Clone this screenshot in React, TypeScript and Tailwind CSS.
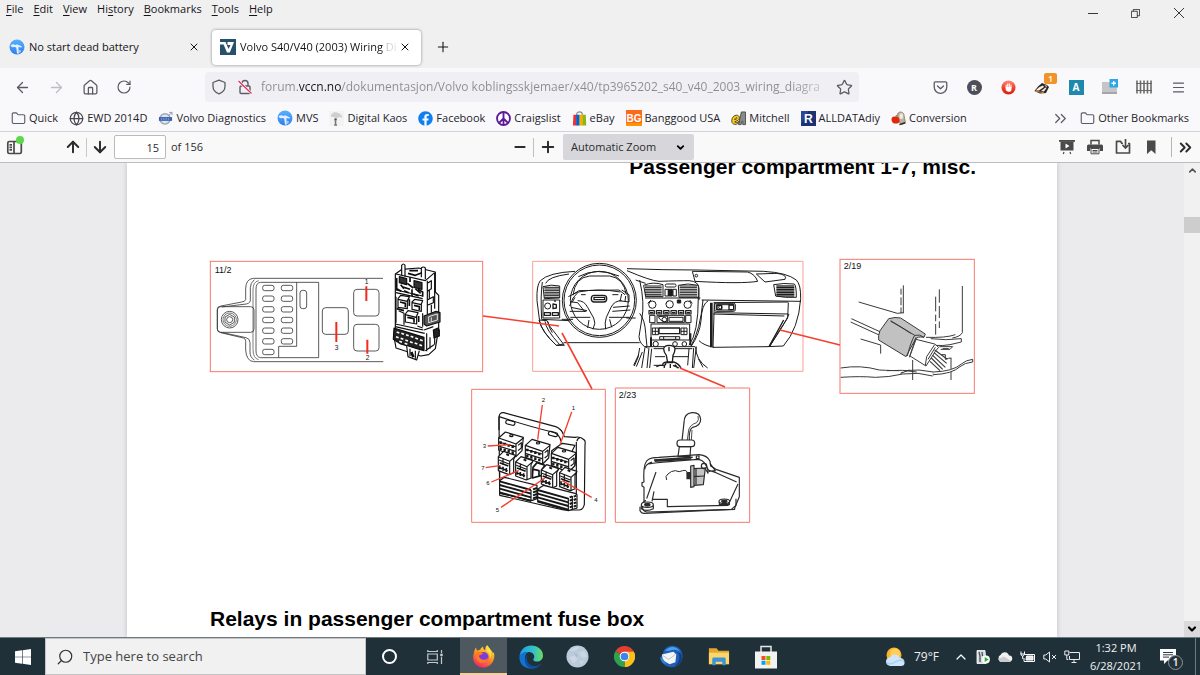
import React from "react";
import {
  ArrowDown,
  ArrowLeft,
  ArrowRight,
  ArrowUp,
  ChevronDown,
  ChevronsRight,
  ChevronUp,
  Folder,
  Globe,
  House,
  Menu,
  Minus,
  Plus,
  RotateCw,
  Search,
  Star,
  X,
} from "lucide-react";
import { FaFacebook } from "react-icons/fa";

/* ---------- favicons ---------- */

const BlueSpanner = () => (
  <svg viewBox="0 0 16 16" className="size-4 shrink-0">
    <defs>
      <linearGradient id="mvs" x1="0" y1="0" x2="0" y2="1">
        <stop offset="0" stopColor="#58b0fb" />
        <stop offset="1" stopColor="#2f7ff0" />
      </linearGradient>
    </defs>
    <circle cx="8" cy="8" r="7.500" fill="url(#mvs)" />
    <path d="M1.500 6.500c1.500-1.500 3.500-1.400 5-.6L8 5.200l5 2.200-.5 1.200-3-.7V10l.4 4.500-1.900.3L7.300 8.700 6 8 3 8.200z" fill="#e2efff" />
    <path d="M9 10.500l3 1-.5 2-2 .5z" fill="#a9cdf8" />
  </svg>
);

const VLogo = () => (
  <svg viewBox="0 0 16 16" className="size-4 shrink-0">
    <rect width="16" height="16" fill="#27506a" />
    <path d="M0 3h5.500l3 7 2-4H7.500V3H14L9.800 13.500H7L3.600 5.500H0z" fill="#fff" />
  </svg>
);

const VolvoBadge = () => (
  <svg viewBox="0 0 16 16" className="size-[15px] shrink-0">
    <circle cx="7.500" cy="8.500" r="5.500" fill="#dfe5ee" stroke="#9aa5b5" strokeWidth="1.500" />
    <path d="M11.500 4.500L15 1.500M12 1.500h3v3" stroke="#8e99a8" fill="none" />
    <rect x="1" y="6.500" width="14" height="4" fill="#3a5fae" />
    <path d="M3 8.500h10" stroke="#b8c8ea" strokeDasharray="1.500 1" />
  </svg>
);

const KaosIcon = () => (
  <svg viewBox="0 0 16 16" className="size-[15px] shrink-0">
    <rect width="16" height="16" fill="#f3f3f3" />
    <path d="M2 6c0-3 3-5 6-4.500S14 4 14.500 7L11 6.500 8 8 5 6.500z" fill="#cfcfcf" />
    <circle cx="7" cy="9" r="1.300" fill="#555" />
    <path d="M7 10v4M5.500 15h3M6 11h1" stroke="#777" strokeWidth="1.600" />
  </svg>
);

const PeaceIcon = () => (
  <svg viewBox="0 0 16 16" className="size-[15px] shrink-0" fill="none" stroke="#5f1a9b" strokeWidth="2">
    <circle cx="8" cy="8" r="6.900" fill="#fff" />
    <path d="M8 1v14M8 8l-5 5M8 8l5 5" />
  </svg>
);

const EbayBag = () => (
  <svg viewBox="0 0 16 16" className="size-[15px] shrink-0">
    <path d="M5 6V3.500C5 0 11 0 11 3.500V6" fill="none" stroke="#8d8d8d" strokeWidth="1.200" />
    <path d="M1.500 4H5v11.500H1z" fill="#e53238" />
    <rect x="4.500" y="4" width="3.800" height="11.500" fill="#0064d2" />
    <rect x="8" y="4" width="3.800" height="11.500" fill="#f5af02" />
    <path d="M11.500 4h3.200l.5 11.500h-3.700z" fill="#86b817" />
  </svg>
);

const BanggoodIcon = () => (
  <svg viewBox="0 0 16 16" className="size-4 shrink-0">
    <rect width="16" height="16" fill="#ff6a1a" />
    <rect y="13" width="16" height="3" fill="#ff9400" />
    <text x="8" y="12" textAnchor="middle" fontSize="10" fontWeight="700" fill="#fff" fontFamily="Liberation Sans, sans-serif">BG</text>
  </svg>
);

const MitchellIcon = () => (
  <svg viewBox="0 0 16 16" className="size-[15px] shrink-0">
    <path d="M8 14.500L11 1h4.500v13.500h-3V11h-1l-.7 3.500z" fill="#8b8b8b" stroke="#333" strokeWidth=".8" />
    <path d="M8.800 11c-1 4.500-8 4.500-8-.5C.8 6.500 3.500 4.500 6 4.500c3 0 4 3.500 1.500 5.500L4 11.500c1 1.500 3 .8 4.800-.5zM3.800 9.300c.5-2 2.500-3 2.700-1.800 0 .8-1.200 1.500-2.700 1.800z" fill="#ffd21f" stroke="#3b3000" strokeWidth=".9" fillRule="evenodd" />
  </svg>
);

const AlldataIcon = () => (
  <svg viewBox="0 0 16 16" className="size-[15px] shrink-0">
    <rect width="16" height="16" fill="#1d3272" />
    <path d="M0 0h8L0 14z" fill="#2c4795" />
    <text x="8" y="12.500" textAnchor="middle" fontSize="13" fontWeight="700" fill="#fff" fontFamily="Liberation Sans, sans-serif">R</text>
  </svg>
);

const ConversionIcon = () => (
  <svg viewBox="0 0 16 16" className="size-[15px] shrink-0">
    <path d="M7 3c2-3.500 7-2 7 2l1.500 8-5 1.500L7 8z" fill="#b9b1a4" stroke="#8a7654" strokeWidth=".8" />
    <ellipse cx="11" cy="5.500" rx="2" ry="3" fill="#eee9de" />
    <path d="M9 14.500l6-2" stroke="#2e2c2a" strokeWidth="1.500" />
    <path d="M5 6.500C3 5 .5 6.500.5 9s2 5 4.500 4.200C8.500 14 9.500 11.500 9 9S7 5.500 5 6.500z" fill="#e3270d" />
    <path d="M5 6.500L6 4.500" stroke="#4b7b20" strokeWidth="1.200" />
  </svg>
);

type Bookmark = { label: string; icon: React.ReactNode };

const bookmarks: Bookmark[] = [
  { label: "Quick", icon: <Folder className="size-[15px] shrink-0 text-[#5b5b66]" strokeWidth={1.8} /> },
  { label: "EWD 2014D", icon: <Globe className="size-[15px] shrink-0 text-[#4a4a55]" strokeWidth={2} /> },
  { label: "Volvo Diagnostics", icon: <VolvoBadge /> },
  { label: "MVS", icon: <BlueSpanner /> },
  { label: "Digital Kaos", icon: <KaosIcon /> },
  { label: "Facebook", icon: <FaFacebook className="size-[15px] shrink-0 text-[#0f80f0]" /> },
  { label: "Craigslist", icon: <PeaceIcon /> },
  { label: "eBay", icon: <EbayBag /> },
  { label: "Banggood USA", icon: <BanggoodIcon /> },
  { label: "Mitchell", icon: <MitchellIcon /> },
  { label: "ALLDATAdiy", icon: <AlldataIcon /> },
  { label: "Conversion", icon: <ConversionIcon /> },
];

/* ---------- browser chrome ---------- */

const menus = [
  ["", "F", "ile"],
  ["", "E", "dit"],
  ["", "V", "iew"],
  ["Hi", "s", "tory"],
  ["", "B", "ookmarks"],
  ["", "T", "ools"],
  ["", "H", "elp"],
];

function MenuBar() {
  return (
    <div className="flex h-7 items-start justify-between">
      <nav className="flex gap-[10px] pl-[6px] text-[11px] leading-[18px]">
        {menus.map(([pre, key, post]) => (
          <button key={key + post} type="button">
            {pre}
            <span className="underline underline-offset-2">{key}</span>
            {post}
          </button>
        ))}
      </nav>
      <div className="flex text-[#222]">
        <button type="button" aria-label="Minimize" className="grid h-[26px] w-[43px] place-items-center">
          <svg viewBox="0 0 10 10" className="size-[10px]"><path d="M0 5.500h10" stroke="currentColor" strokeWidth=".9" /></svg>
        </button>
        <button type="button" aria-label="Restore" className="grid h-[26px] w-[43px] place-items-center">
          <svg viewBox="0 0 10 10" className="size-[9px]" fill="none" stroke="currentColor" strokeWidth=".9">
            <path d="M.5 2.500h6.500v7H.5zM2.500 2.500V.5h7v7H7" />
          </svg>
        </button>
        <button type="button" aria-label="Close" className="grid h-[26px] w-[43px] place-items-center">
          <svg viewBox="0 0 10 10" className="size-[10px]"><path d="M0 0l10 10M10 0L0 10" stroke="currentColor" strokeWidth=".9" /></svg>
        </button>
      </div>
    </div>
  );
}

function Tab({ title, icon, active }: { title: string; icon: React.ReactNode; active?: boolean }) {
  return (
    <div
      className={
        active
          ? "flex h-[35px] w-[209px] items-center rounded bg-white pr-[10px] pl-2 shadow-[0_0_3px_rgba(0,0,0,0.45)]"
          : "flex h-[35px] w-[209px] items-center rounded pr-[10px] pl-2"
      }
    >
      {icon}
      <button
        type="button"
        className={
          active
            ? "ml-1 min-w-0 flex-1 overflow-hidden bg-[linear-gradient(90deg,#15141a_142px,#d0d0d0_148px,#e8e8e8_160px)] bg-clip-text text-left text-[11px] whitespace-nowrap text-transparent"
            : "ml-1 min-w-0 flex-1 overflow-hidden text-left text-[11px] whitespace-nowrap"
        }
      >
        {title}
      </button>
      <button type="button" aria-label={`Close ${title}`} className="grid w-3 shrink-0 place-items-center">
        <X className="size-3" strokeWidth={2} />
      </button>
    </div>
  );
}

function NavButton({ label, children }: { label: string; children: React.ReactNode }) {
  return (
    <button type="button" aria-label={label} className="relative grid h-7 w-[34px] shrink-0 place-items-center text-[#5b5b66]">
      {children}
    </button>
  );
}

function NavBar() {
  return (
    <div className="flex h-[38px] items-center bg-[#f9f9fb] px-[5px]">
      <NavButton label="Back"><ArrowLeft className="size-[17px]" strokeWidth={1.8} /></NavButton>
      <NavButton label="Forward"><ArrowRight className="size-[17px] text-[#bdbdc2]" strokeWidth={1.8} /></NavButton>
      <NavButton label="Home"><House className="size-[17px]" strokeWidth={1.8} /></NavButton>
      <NavButton label="Reload"><RotateCw className="size-[16px]" strokeWidth={1.8} /></NavButton>
      <div className="mx-16 flex h-[30px] min-w-0 flex-1 items-center rounded bg-[#f0f0f4] px-[6px] text-[#5b5b66]">
        <svg viewBox="0 0 16 16" className="size-4 shrink-0" fill="none" stroke="currentColor" strokeWidth="1.300">
          <path d="M8 1.200L14 3.500v3.800c0 3.500-2.500 6.300-6 7.500-3.500-1.200-6-4-6-7.500V3.500z" strokeLinejoin="round" />
        </svg>
        <svg viewBox="0 0 16 16" className="ml-[10px] size-4 shrink-0" fill="none" stroke="currentColor" strokeWidth="1.400">
          <rect x="3" y="7" width="10" height="7.500" rx="1.200" />
          <path d="M5 7V4.500a3 3 0 0 1 6 0V7" />
          <path d="M1.500 2l13 12.500" stroke="#fff" strokeWidth="2.500" />
          <path d="M1.500 2l13 12.500" stroke="#e8305c" />
        </svg>
        <input
          type="text"
          aria-label="Address"
          defaultValue="forum.vccn.no/dokumentasjon/Volvo koblingsskjemaer/x40/tp3965202_s40_v40_2003_wiring_diagra"
          className="ml-2 min-w-0 flex-1 bg-[linear-gradient(90deg,#8b8b92_38px,#15141a_38px,#15141a_81px,#8b8b92_81px,#8b8b92_530px,#dcdce0_570px)] bg-clip-text text-[12px] text-transparent outline-none"
        />
        <button type="button" aria-label="Bookmark this page"><Star className="size-[17px]" strokeWidth={1.8} /></button>
      </div>
      <NavButton label="Pocket">
        <svg viewBox="0 0 16 16" className="size-[15px]" fill="none" stroke="currentColor" strokeWidth="1.400" strokeLinecap="round" strokeLinejoin="round">
          <path d="M2.500 2h11c.7 0 1.200.5 1.200 1.200V7.500a6.700 6.700 0 0 1-13.400 0V3.200C1.300 2.500 1.800 2 2.500 2zM4.800 6.300L8 9.300l3.200-3" />
        </svg>
      </NavButton>
      <NavButton label="Reader">
        <span className="grid size-[15px] place-items-center rounded-full bg-[#4f4f5c] text-[9px] leading-none font-bold text-white">R</span>
      </NavButton>
      <NavButton label="Blocker">
        <svg viewBox="0 0 16 16" className="size-[15px]">
          <defs>
            <linearGradient id="hand" x1="0" y1="0" x2="0" y2="1">
              <stop offset="0" stopColor="#ff8a78" />
              <stop offset=".5" stopColor="#f04430" />
              <stop offset="1" stopColor="#d91c0b" />
            </linearGradient>
          </defs>
          <circle cx="8" cy="8" r="7.500" fill="url(#hand)" />
          <path d="M5.500 8V5.500M7.200 7.500V4M8.900 7.500V4M10.600 8V5.500" stroke="#fff" strokeWidth="1.200" strokeLinecap="round" />
          <path d="M5 7.500h6.200V10c0 1.700-1.200 2.500-2.900 2.500S4.800 11.200 5 9.500z" fill="#fff" />
        </svg>
      </NavButton>
      <NavButton label="Badger">
        <svg viewBox="0 0 16 16" className="size-4">
          <path d="M.5 12L4 7.500 8 4l5 2 2 2-1.500 3L12 14l-6 .5z" fill="#2c2620" />
          <path d="M1.500 11.500L5.500 8 9 6.500l1 1.500-5 3.500zM7 12l4.500-3.500 1 .5-2.500 3.500z" fill="#f4efe7" />
          <path d="M10 5.500l3 1.500-.5 1.500z" fill="#d9d2c6" />
          <path d="M1 12.500l4 .3 5 1" stroke="#d2832f" fill="none" />
        </svg>
        <span className="absolute top-0 right-[2px] h-[11px] w-[13px] rounded-xs bg-[#f0932b] text-center text-[9px] leading-[11px] font-semibold text-white">1</span>
      </NavButton>
      <NavButton label="Autofill">
        <span className="grid size-[15px] place-items-center bg-[#1e88ad] text-[10px] leading-none font-bold text-white">A</span>
      </NavButton>
      <NavButton label="New container">
        <svg viewBox="0 0 16 16" className="size-4">
          <rect x="0" y="3" width="15" height="12" fill="#c5c5c9" />
          <rect x="0" y="13" width="15" height="2" fill="#a5a5aa" />
          <rect x="7.500" y="0" width="8.500" height="8.500" fill="#2aa7e6" />
          <path d="M11.700 2v4.500M9.500 4.200H14" stroke="#fff" strokeWidth="1.400" />
        </svg>
      </NavButton>
      <NavButton label="Fence">
        <svg viewBox="0 0 16 16" className="size-4" stroke="#6a6a6a">
          <path d="M1 1.500v13M4.500 1.500v13M8 1.500v13M11.500 1.500v13M15 1.500v13" strokeWidth="1.600" />
          <path d="M0 4.500h16M0 11.500h16" strokeWidth="1.100" />
        </svg>
      </NavButton>
      <NavButton label="Application menu"><Menu className="size-[15px]" strokeWidth={1.8} /></NavButton>
    </div>
  );
}

function BookmarksBar() {
  return (
    <div className="flex h-[25px] items-center justify-between bg-[#f9f9fb] px-[11px] pb-px text-[11px] text-[#25242b]">
      <div className="flex gap-[11px]">
        {bookmarks.map((b) => (
          <a key={b.label} href="#" className="flex items-center gap-[3px] whitespace-nowrap">
            {b.icon}
            {b.label}
          </a>
        ))}
      </div>
      <div className="flex items-center gap-[10px]">
        <button type="button" aria-label="More bookmarks"><ChevronsRight className="size-[19px] text-[#5b5b66]" strokeWidth={1.6} /></button>
        <button type="button" className="flex items-center gap-[3px] whitespace-nowrap">
          <Folder className="size-[15px] text-[#5b5b66]" strokeWidth={1.8} />
          Other Bookmarks
        </button>
      </div>
    </div>
  );
}

function PdfToolbar() {
  return (
    <div className="grid h-8 grid-cols-[1fr_auto_1fr] items-center border-t border-b border-t-[#d3d3d7] border-b-[#bdbdbd] bg-[#f9f9fa] pl-[6px] text-[11px] text-[#2b2b2b]">
      <div className="flex items-center">
        <button type="button" aria-label="Toggle sidebar" className="relative mr-[40px]">
          <svg viewBox="0 0 18 18" className="size-[18px]" fill="none" stroke="#4a4a4a" strokeWidth="1.700">
            <rect x="1.800" y="3.500" width="13.500" height="12" rx="1.500" />
            <path d="M8 3.500v12M3.500 6.800h2.500M3.500 9.300h2.500M3.500 11.800h2.500" />
          </svg>
          <span className="absolute -top-0.5 right-0 size-2 rounded-full bg-[#5bd94b]" />
        </button>
        <button type="button" aria-label="Previous page"><ArrowUp className="size-[18px]" strokeWidth={2.6} /></button>
        <span className="mx-1 h-[19px] w-px bg-[#c9c9c9]" />
        <button type="button" aria-label="Next page"><ArrowDown className="size-[18px]" strokeWidth={2.6} /></button>
        <input
          type="text"
          aria-label="Page"
          defaultValue="15"
          className="ml-[5px] h-6 w-[52px] rounded-xs border border-[#bbbbbc] bg-white pr-[6px] text-right outline-none"
        />
        <span className="ml-[5px]">of 156</span>
      </div>
      <div className="flex items-center">
        <button type="button" aria-label="Zoom out"><Minus className="size-4" strokeWidth={2.8} /></button>
        <span className="mx-[5px] h-[19px] w-px bg-[#c0c0c0]" />
        <button type="button" aria-label="Zoom in"><Plus className="size-[18px]" strokeWidth={2.6} /></button>
        <div className="relative ml-[6px]">
          <select aria-label="Zoom" className="h-[26px] w-[131px] appearance-none rounded-xs bg-[#d7d7db] pl-2 outline-none">
            <option>Automatic Zoom</option>
          </select>
          <ChevronDown className="pointer-events-none absolute top-2 right-2 size-[11px] text-black" strokeWidth={4} />
        </div>
      </div>
      <div className="flex items-center justify-end gap-3 pr-[5px]">
        <button type="button" aria-label="Presentation mode">
          <svg viewBox="0 0 16 16" className="size-4">
            <path d="M0 1h16v1.800H0z" fill="#4a4a4a" />
            <path d="M1.500 2.500h13v9h-13z" fill="#4a4a4a" />
            <path d="M6.500 4.500l4 2.500-4 2.500z" fill="#fff" />
            <path d="M5 13L4.300 15M11 13l.7 2" stroke="#4a4a4a" strokeWidth="1.200" />
          </svg>
        </button>
        <button type="button" aria-label="Print">
          <svg viewBox="0 0 16 16" className="size-4">
            <path d="M4 5.500v-4h8v4" fill="none" stroke="#4a4a4a" strokeWidth="1.500" />
            <path d="M1.500 5.500h13A1.500 1.500 0 0 1 16 7v5h-3v-2.500H3V12H0V7a1.500 1.500 0 0 1 1.500-1.500z" fill="#4a4a4a" />
            <path d="M4 9.500h8v5.300H4zM5.500 11.500h5M5.500 13h5" fill="#fff" stroke="#4a4a4a" />
          </svg>
        </button>
        <button type="button" aria-label="Download">
          <svg viewBox="0 0 16 16" className="size-4" fill="none" stroke="#4a4a4a" strokeWidth="1.700">
            <path d="M8 4.500H7L5.500 2.300H1.500v11.700h13V4.500H13" strokeLinejoin="round" />
            <path d="M10.500 0v8.500M7.500 6l3 3 3-3" />
          </svg>
        </button>
        <button type="button" aria-label="Current view">
          <svg viewBox="0 0 16 16" className="size-4"><path d="M4 1.500h8.500V15l-4.250-3.800L4 15z" fill="#4a4a4a" /></svg>
        </button>
        <button type="button" aria-label="Tools" className="flex items-center gap-1">
          <span className="h-5 w-px bg-[#b5b5b5]" />
          <ChevronsRight className="size-[19px]" strokeWidth={2.4} />
        </button>
      </div>
    </div>
  );
}

/* ---------- diagram ---------- */

const slots = [114, 146, 178, 210, 242, 274, 306];

function FuseBoxFigure() {
  return (
    <svg x="200" y="250" width="290" height="130" viewBox="0 0 870 390" fill="none" stroke="#3a3a3a" strokeWidth="2.500">
      <rect x="31" y="34" width="817" height="331" stroke="#f8796c" strokeWidth="3" />
      <path d="M549 85H160q-23 2-23 32v32q-2 6-12 7l-62 12q-11 1-11 10v59q0 8 10 11l64 15q12 2 11 12v25q2 33 24 35h389" />
      <path d="M163 89q-12 10-12 24v34q2 12-12 15l-74 9M163 330q-13-8-13-24v-28q0-12-12-15l-74-16" />
      <path d="M176 92q-17 3-17 28v178q0 27 17 31" strokeWidth="2" />
      <rect x="52" y="170" width="110" height="77" rx="10" />
      <path d="M356 97H182q-14 1-14 20v186q0 18 14 20H356zM290 97v192h-54v34" />
      {slots.map((y, i) => (
        <g key={y}>
          <rect x="188" y={y - 8} width="34" height="16" rx="6" />
          {i < 6 && <rect x="244" y={y - 8} width="34" height="16" rx="6" />}
        </g>
      ))}
      <rect x="300" y="121" width="20" height="55" rx="8" />
      <circle cx="89" cy="209" r="25" />
      <circle cx="89" cy="209" r="20" strokeWidth="2" />
      <path d="M89 193l14 8v16l-14 8-14-8v-16z" />
      <circle cx="89" cy="209" r="9" />
      <rect x="461" y="118" width="76" height="80" rx="10" />
      <rect x="461" y="223" width="76" height="80" rx="10" />
      <rect x="367" y="173" width="78" height="80" rx="10" />
      <path d="M499 109v44M409 216v60M502 269v42" stroke="#f22b1c" strokeWidth="6" />
      <g fill="#111" stroke="none" fontSize="20">
        <text x="44" y="68" fontSize="27">11/2</text>
        <text x="494" y="103">1</text>
        <text x="497" y="330">2</text>
        <text x="404" y="299">3</text>
      </g>
      {/* junction box in perspective */}
      <g stroke="#0d0d0d" strokeWidth="3.500" strokeLinejoin="round">
        <path d="M586 72l20-14 50-4 50 12v60l10 10v100l-10 60-20 18-24 4-74-24-6-34 4-24z" fill="#fff" />
        <path d="M605 76V46q5-8 10 0v34M664 82V54q6-6 12 0v34" fill="#fff" />
        <path d="M588 72l88 20 28-24M682 92v100M704 70v106M588 120l80 18M588 128l80 18M586 222l84 18M586 230l88 20" />
        <path d="M598 80l22 6v18l-22-6zM642 92l24 6v20l-24-6z" fill="#333" />
        <path d="M602 104l10 12M646 116l16 14M624 70l22 6 20-8M628 62h26M622 100l18 14M630 82v14M590 84v36M606 110l24 8M636 118v20M654 118l14 8v14M590 116l14 8M612 122l14 6M640 132l16 6" stroke="#0d0d0d" strokeWidth="5" />
        <path d="M594 146l8-10 26 4-6 12v24l-28-4zM594 148l28 6 6-12" fill="#fff" />
        <path d="M636 156l8-8 24 4-4 10v22l-28-6zM636 158l28 6" fill="#fff" />
        <path d="M616 192l8-10 30 6-4 10v24l-34-6zM616 194l32 8 6-12" fill="#fff" />
        <path d="M600 156l16 4v12M642 166l16 4v10M622 202l20 4v12M628 148v20M590 176l22 6M656 198v18" strokeWidth="5" />
        <path d="M588 140v78M596 182l16 8v34M668 190v40M652 228l16 6M682 100l12-8v24l-12 8M682 150l18-10v18l-18 8M688 120v26M694 164v24" />
        <path d="M672 198l36-14 12 4v28l-40 12-8-6z" fill="#555" />
        <path d="M686 200l26-8v18l-26 8zM694 202v12" stroke="#fff" strokeWidth="2.500" />
        <path d="M700 240l14-6 4 6v18l-16 6z" fill="#222" />
        <path d="M582 234l90 28v40l-70-20-22-14z" fill="#222" />
        <path d="M590 246l8 3M604 250l8 3M618 254l8 3M632 259l8 3M646 264l8 3M660 269l8 3M588 260l8 3M602 265l8 3M616 270l8 3M630 275l8 3M644 279l8 3M658 284l8 3M598 274l8 3M614 280l8 3" stroke="#fff" strokeWidth="5" />
        <path d="M620 288l4 32 26 10 8-28M630 296v22M646 302v24" fill="#fff" />
        <path d="M634 306l6 16" strokeWidth="8" />
        <path d="M680 250v54M690 262v34M704 262v22M676 302l26-18M672 240l28-10" />
      </g>
    </svg>
  );
}

const ventRows = [0, 1, 2, 3, 4, 5, 6];

function DashboardFigure() {
  return (
    <svg x="525" y="250" width="290" height="130" viewBox="0 0 870 390" fill="none" stroke="#1c1c1c" strokeWidth="3" strokeLinejoin="round">
      <rect x="23" y="34" width="811" height="330" stroke="#f8a097" strokeWidth="3" />
      {/* dashboard shell */}
      <path d="M150 64q-80 4-104 28-12 14-10 60l8 62q6 30 50 72l22-4M306 56q110 4 210 4l200 4q70 4 98 26 14 14 13 56-6 90-52 142l-50 2" />
      <path d="M62 100q8-20 70-28M52 96q-6 40-2 112l84 4M306 62q70 30 96 32 60-2 90-2 30 2 30 24v34M332 90q10 4 30 10" />
      <path d="M502 64l8 30q140 8 188 0-8-22-30-28zM694 72l26 24 60-8q8-14-24-18z" />
      <circle cx="514" cy="77" r="4" />
      <path d="M530 150l298 4M566 158l224-2M568 188l222 4M568 158l-4 134 162-2M564 192l214 6M790 158l-2 46q-28 40-54 86M566 292q-30-6-44-20M792 192q-10 26-58 96" />
      <path d="M557 158v134M561 158v132M732 290l44-80" strokeWidth="4" />
      <path d="M116 278h228M94 286h24l-30-40q-14-14-22-34l-24-2q8 36 52 76zM60 214q2 24 44 70M68 214q4 20 14 34" />
      {/* vents */}
      <path d="M54 110q24-8 50-2v36l-46 2zM356 106q28-12 58-2v36h-52zM460 106q28-8 60 0v36h-58zM746 104q30-6 62-2 6 4 6 40-34 2-62-4z" fill="#fff" />
      {ventRows.map((i) => (
        <path key={i} d={`M58 ${112 + i * 5}h44M360 ${108 + i * 5}h50M464 ${108 + i * 5}h52`} strokeWidth="3" />
      ))}
      {ventRows.map((i) => (
        <path key={i} d={`M754 ${108 + i * 5}h54`} strokeWidth="4" />
      ))}
      <rect x="421" y="102" width="32" height="9" rx="4" />
      <path d="M420 118h10v20h-10zM444 118h10v20h-10z" />
      <rect x="430" y="118" width="12" height="20" fill="#1c1c1c" />
      {/* side switches */}
      <path d="M54 150h50v54H54z" />
      <circle cx="68" cy="168" r="9" />
      <path d="M84 162l10 2v10l-10 2zM58 188h18v8H58zM82 188h18v8H82zM90 150v6" strokeWidth="4" />
      {/* centre console */}
      <path d="M360 144h166M344 90q16 70 6 120l-8 50q2 26 26 34M520 140q0 110-28 146M534 150q-8 90-36 138M344 190q16 20 18 60l4 40M550 152q-20 10-22 60-4 40-30 78M360 290h150" />
      <circle cx="382" cy="164" r="11" /><circle cx="434" cy="163" r="11" /><circle cx="488" cy="164" r="11" />
      <path d="M378 150l-10 10M494 150l8 10M430 152l-8 8" />
      <rect x="457" y="150" width="10" height="9" fill="#1c1c1c" />
      {[372, 394, 416, 438, 460, 482].map((x) => (
        <path key={x} d={`M${x} 182h16v10h-16zM${x + 3} 188h10`} strokeWidth="3.500" />
      ))}
      <path d="M374 196h16v22h-16zM396 196h82v22h-82zM482 196h16v22h-16zM400 200q6 16 28 16V198zM432 202h42v12h-42z" />
      <circle cx="418" cy="209" r="7" />
      <path d="M378 222h116v48H378zM382 234h18v20h-18zM468 234h18v20h-18zM391 234v20M382 244h18M477 234v20M468 244h18" />
      <path d="M402 234h62v17h-62z" strokeWidth="4" />
      <path d="M404 260h60v8h-60zM416 260v8M452 260v8" />
      <circle cx="392" cy="282" r="8" /><circle cx="450" cy="282" r="7" /><circle cx="478" cy="282" r="7" />
      <path d="M378 262v28M496 250v36" strokeWidth="6" />
      {/* gear lever */}
      <path d="M386 296h34M448 296h54M390 320h30M444 320h46M386 346h32M360 292l-10 62M372 292l-6 62M380 296l-6 58M344 294q-2 30-16 54M506 294l-4 60M514 290l-8 64M492 296l-4 50M512 290q0 40 36 64" />
      <path d="M416 296q2-10 16-10 16 0 18 10 0 10-6 20l-2 22h-14l-4-22q-8-10-8-20z" fill="#fff" strokeWidth="4" />
      <path d="M432 290v14M414 348q-4-10 12-12h20q14 4 22 18M394 350l10-4h10M444 346l18 8M424 340q-8 8-6 14M436 342v12M450 344l8 10" strokeWidth="4" />
      <path d="M326 346l14-30M334 350l18-44M520 326l14 26" />
      {/* steering wheel */}
      <circle cx="223" cy="151" r="106" fill="#fff" />
      <path d="M144 136q6-54 50-58h60q42 6 50 56M160 80q56-30 122-2" />
      <path d="M146 132l16-10 120-2 18 14M130 140l28-14M290 120l22 14v22l-30-4M160 126l-16 18-10 24M140 156l18 2 22 28M138 172l48 10M134 184h50M136 202h60M252 202h62M262 184l54-4M264 172l50-4M290 132l-4 18M302 138l-2 16M150 142l-8 14" />
      <path d="M158 152q20 0 30 20l18 32q8 14-2 34M290 152q-22 0-32 20l-14 30q-6 16-2 36M160 126q60-12 126 0M168 134h14M262 134h18M110 208h34M304 204h28" />
      <circle cx="223" cy="151" r="111" strokeWidth="3" />
      <circle cx="223" cy="151" r="87" />
      <path d="M192 210l-4 24M254 208l6 24" />
      <rect x="199" y="136" width="46" height="20" rx="9" strokeWidth="4" fill="#fff" />
      <path d="M207 142h32v7h-32z" strokeWidth="4" />
      {/* passenger switch panel */}
      <rect x="569" y="160" width="62" height="24" rx="5" />
      <path d="M574 164h52v16h-52z" />
      <path d="M576 166h14v12h-14zM612 165h14v14h-14z" strokeWidth="4" />
      <circle cx="586" cy="172" r="5" />
    </svg>
  );
}

function ConnectorFigure() {
  return (
    <svg x="830" y="250" width="155" height="150" viewBox="0 0 465 450" fill="none" stroke="#3a3a3a" strokeWidth="3">
      <rect x="30" y="28" width="403" height="402" stroke="#f8796c" />
      <path d="M220 106v84M213 116v18M213 142v24M213 172v18M86 156l116 34 18-2M397 108v140q-6 12-30 16M317 140v44M328 118v40M317 194v20M328 168v36M317 222v32M328 214v20M64 206l92 42M62 216l92 42M92 267l60 18v26" />
      <path d="M288 262q60 2 88-8M302 266q44 6 92 0v10l-34 8q-20 4-46 2M328 290h40l-8 8h-28M248 330v60M363 324v66M338 296h18M334 314l12 0v14q10-4 18-4" />
      <path d="M176 206q20-6 36-2l74 48-4 10q-20-4-26 6l-28 52-82-50q-2-14 4-28z" fill="#c1c1c1" />
      <path d="M182 212l72 44q16-4 28 6M254 256q-12 20-22 62M182 214q20 10 60 36M258 262q-8 24-20 60" />
      <path d="M258 268l56 14 12 10-10 12-28 44-48-30z" fill="#fff" />
      <path d="M314 284l-24 36-4 26M316 292l-22 36" />
      <path d="M312 308l38 32M308 316l38 36M304 324l34 34M300 334l30 28M314 300l38 28" strokeWidth="3.500" />
      <path d="M32 354q60-10 116 6 40 2 60 2M32 382q60-4 104 0 40 0 82-10l46-2 44 8M222 362q46-6 88 4M310 366v10M218 366l-6 4 26-10" />
      <path d="M310 366q60-2 84-24 14-12 34-14v8q-24 2-38 14-24 22-80 24" fill="#fff" />
      <path d="M170 362q50-4 90 4" />
      <text x="41" y="57" fontSize="27" fill="#111" stroke="none">2/19</text>
    </svg>
  );
}

function Relay({ x, y, small }: { x: number; y: number; small?: boolean }) {
  if (small) {
    return (
      <g transform={`translate(${x} ${y})`}>
        <path d="M0 10L16-6l36 12-6 12v40L32 64 0 52z" fill="#fff" />
        <path d="M0 10l34 14 18-16M34 24v40M2 20l30 12M14 14v20" />
        <path d="M4 36v12M14 40v12M24 44v12M4 28l26 10M6 44l22 8" strokeWidth="5" />
        <path d="M24 2l8 4" strokeWidth="6" />
      </g>
    );
  }
  return (
    <g transform={`translate(${x} ${y})`}>
      <path d="M0 14L20-4l54 16-4 40-18 18L0 50z" fill="#fff" />
      <path d="M0 14l52 18 22-18M52 32v36M0 26l50 14M0 38l50 16" />
      <path d="M6 24v8M18 28v8M30 32v8M42 36v8M6 42v8M18 46v8M30 50v8M42 54v8" strokeWidth="7" />
      <path d="M58 36l10-8v16l-10 8" />
      <ellipse cx="38" cy="7" rx="5" ry="3" />
    </g>
  );
}

function RelayBankFigure() {
  return (
    <svg x="465" y="380" width="150" height="150" viewBox="0 0 450 450" fill="none" stroke="#161616" strokeWidth="3.500" strokeLinejoin="round">
      <rect x="20" y="28" width="401" height="399" stroke="#f8796c" strokeWidth="3" />
      <path d="M102 110q2-14 14-12l156 42q18 6 26 30l32 2q16-4 28 8 4 4 2 14l-2 180q-4 16-16 16H296L104 346z" fill="#fff" />
      <path d="M102 110q100 32 160 46 22 6 26 28M102 110v40M336 184q0-8 8-10M334 186v200M104 240v60" />
      <rect x="122" y="122" width="28" height="12" rx="6" transform="rotate(14 136 128)" />
      <rect x="250" y="156" width="28" height="12" rx="6" transform="rotate(14 264 162)" />
      <Relay x={101} y={160} />
      <Relay x={181} y={182} />
      <path d="M260 212l32-22 38 6-12 24 16 8-4 28-20 18-50-16z" fill="#fff" />
      <Relay x={259} y={206} />
      <Relay x={100} y={220} small />
      <Relay x={152} y={236} small />
      <path d="M204 262l12-14 24 8-10 14v16l-28 8zM206 268l16 4v18" fill="#fff" strokeWidth="5" />
      <Relay x={229} y={260} small />
      <Relay x={284} y={268} small />
      <path d="M104 302l14-10 98 24v40l-16 6-96-22zM218 328l18-12 94 24 6 4v40l-26 8-92-26z" fill="#fff" />
      {[0, 1, 2, 3].map((i) => (
        <path key={i} d={`M104 ${304 + i * 11}l94 26M218 ${330 + i * 11}l92 26`} strokeWidth="5.500" />
      ))}
      {[0, 1, 2, 3].map((i) => (
        <path key={i} d={`M204 ${328 + i * 9}l12-4M314 ${352 + i * 10}l8-3M326 ${350 + i * 10}l8-3`} strokeWidth="6" />
      ))}
      <path d="M198 330v32M310 354v38M322 348v40" />
      <path d="M232 75l-14 104M320 96l-35 98M68 198l68-4M62 263l42-6M79 306l82-34M108 382l132-88M380 352l-88-50" stroke="#f4402f" strokeWidth="4" />
      <g fill="#111" stroke="none" fontSize="18">
        <text x="230" y="66">2</text>
        <text x="320" y="89">1</text>
        <text x="53" y="204">3</text>
        <text x="49" y="269">7</text>
        <text x="64" y="315">6</text>
        <text x="92" y="396">5</text>
        <text x="388" y="365">4</text>
      </g>
    </svg>
  );
}

function ShifterFigure() {
  return (
    <svg x="610" y="380" width="150" height="150" viewBox="0 0 450 450" fill="none" stroke="#2a2a2a" strokeWidth="3.500" strokeLinejoin="round">
      <rect x="16" y="24" width="403" height="403" stroke="#f8796c" strokeWidth="3" />
      <path d="M208 200l-4 30h36l2-30z" fill="#fff" />
      <path d="M216 182l6-54q0-28 24-30 24-2 26 20 0 20-24 24-12 6-10 40z" fill="#fff" />
      <path d="M232 180l4-30q4-16 24-22 8-8 4-20M244 180l2-30" strokeWidth="2.500" />
      <rect x="201" y="180" width="53" height="20" rx="9" fill="#fff" />
      <path d="M102 366V322l-6-4v-10l6-2q-4-60 14-68 10-6 30-6l122-8q24 2 32 20l2 14 16 10 70 24v58l-14 34v4l-264 8q-8-2-12-8v-16q2-10 10-10" />
      <path d="M90 380v12q4 8 12 8l262-12 14-12v-20" />
      <path d="M116 252q10-4 150-14 20 4 28 32l24 8 62 28M104 268q2-16 22-22M300 250l16 22-20 2" />
      <path d="M132 240l116-8M134 244l110-7" strokeWidth="4.500" />
      <rect x="259" y="228" width="8" height="8" />
      <path d="M138 276l-28 80M132 334l-6 30M128 358h44v22l182-4 30-64" />
      <ellipse cx="112" cy="374" rx="18" ry="8" fill="#fff" /><ellipse cx="112" cy="374" rx="8" ry="4" fill="#2a2a2a" />
      <path d="M94 376v10q16 10 36 0v-10" />
      <ellipse cx="343" cy="364" rx="16" ry="7" fill="#fff" /><ellipse cx="343" cy="364" rx="8" ry="4" fill="#2a2a2a" />
      <path d="M328 366v8h30v-8" />
      <path d="M170 300q-6-12 4-18 10-10 22-10 12 6 22 0 8-4 14 4v8" strokeWidth="3" />
      <path d="M242 258l10-2v64l-10 2zM252 266l34-2-6 50-28 2z" fill="#c4c4c4" />
      <path d="M252 290l30-2M258 266v48" />
      <rect x="231" y="278" width="10" height="18" fill="#2a2a2a" />
      <circle cx="282" cy="258" r="8" />
      <path d="M286 266l8 14v-14" />
      <text x="26" y="53" fontSize="27" fill="#111" stroke="none">2/23</text>
    </svg>
  );
}

function Diagram() {
  return (
    <svg viewBox="210 258 766 266" className="mt-[79px] h-auto w-full overflow-visible font-['Liberation_Sans',sans-serif]" role="img" aria-label="Component locations">
      <FuseBoxFigure />
      <DashboardFigure />
      <ConnectorFigure />
      <RelayBankFigure />
      <ShifterFigure />
      <path d="M483 316l76 10M562 333l30 56M680 368l45 19M780 330l60 15" fill="none" stroke="#f4402f" strokeWidth="1.600" />
    </svg>
  );
}

function Viewer() {
  return (
    <main className="flex min-h-0 flex-1 overflow-hidden bg-[#ebebed]">
      <div className="min-w-0 flex-1">
        <article className="mx-auto flow-root h-full w-full max-w-[930px] bg-white pr-[81px] pl-[83px] font-['Liberation_Sans',sans-serif] text-black shadow-[0_0_5px_rgba(0,0,0,0.2)]">
          <h2 className="-mt-2 text-right text-[21px] leading-6 font-bold">Passenger compartment 1-7, misc.</h2>
          <Diagram />
          <h2 className="mt-[83px] text-[21px] leading-6 font-bold">Relays in passenger compartment fuse box</h2>
        </article>
      </div>
      <div className="flex w-4 flex-col items-center bg-[#f1f1f1]">
        <button type="button" aria-label="Scroll up" className="grid h-[15px] w-full place-items-center"><ChevronUp className="size-[11px] text-[#555]" strokeWidth={3.6} /></button>
        <div className="mt-[39px] h-4 w-full bg-[#cdcdcd]" />
        <button type="button" aria-label="Scroll down" className="mt-auto grid h-4 w-full place-items-center bg-[#dadada]"><ChevronDown className="size-[12px] text-black" strokeWidth={4.4} /></button>
      </div>
    </main>
  );
}

/* ---------- taskbar ---------- */

const FirefoxIcon = () => (
  <svg viewBox="0 0 24 24" className="size-[23px]">
    <defs>
      <linearGradient id="ff" x1=".8" y1="0" x2=".3" y2="1">
        <stop offset="0" stopColor="#fff04a" />
        <stop offset=".45" stopColor="#ff9a1f" />
        <stop offset="1" stopColor="#f5246a" />
      </linearGradient>
    </defs>
    <path d="M2 8c.3-2 1-4 2-5.500L5.500 6c1-.7 2-1 3-1 .5-1.500 1.500-2.500 3-3.500 0 2 1 3.300 2.500 4C13.500 3 14.500 1 16 0c.5 2.500 2.500 3.500 4 5.500 1 1 1.500 2 1.800 3.200l1-1.200C25 16 19.500 23.500 12 23.500S-1 17 2 8z" fill="url(#ff)" />
    <circle cx="12" cy="12.500" r="5.200" fill="#7d3cdc" />
    <path d="M4 9c3-3 6-1 8 0-2 0-3 2-5 2 1 5 7 6 10 2-1 6-9 8-12 2z" fill="#ff7b22" />
    <path d="M15 6c3 2 4.500 5 3.500 9 3-5 1-11-2-14z" fill="#ffe14a" />
  </svg>
);

const EdgeIcon = () => (
  <svg viewBox="0 0 24 24" className="size-6">
    <defs>
      <linearGradient id="edgeTop" x1="0" y1=".5" x2="1" y2=".5">
        <stop offset="0" stopColor="#1b9de2" />
        <stop offset=".6" stopColor="#35c1c9" />
        <stop offset="1" stopColor="#6bdc57" />
      </linearGradient>
    </defs>
    <path d="M.5 11C1.500 4.500 6.500.5 12 .5c7 0 12 4.500 12 10 0 4-3 6-6 6-3.500 0-4.500-1.500-3-3.500 1.200-2-1-6-5-6-4.500 0-8 2-9.500 4z" fill="url(#edgeTop)" />
    <path d="M.5 11C2 8 5.500 6.500 9.500 7c-3 1.500-4.500 5-3 9 1.500 4 5 6.500 9 7C6 25.500-.5 19 .5 11z" fill="#1272cf" />
    <path d="M9 9.500c-3 4 0 12 7 11.500 3 0 5-1.500 6.500-3-1.500 3-5 5.800-9 5.800C6 23 3.500 14 9 9.500z" fill="#0c4f9f" />
  </svg>
);

const MoonIcon = () => (
  <svg viewBox="0 0 24 24" className="size-[23px]">
    <circle cx="12" cy="12" r="11.500" fill="#bccbdc" />
    <path d="M4 6q5-5 10-4-3 4-7 4zM13 8l6-2 3 6-4 2zM3 13l6-2 3 4-4 4zM14 17l5-1-3 5z" fill="#ccd7e3" />
    <path d="M8 8l4 2-1 3z" fill="#aabacd" />
  </svg>
);

const ChromeIcon = () => (
  <svg viewBox="0 0 24 24" className="size-[21px]">
    <path d="M12 12L1.600 6A12 12 0 0 1 22.400 6z" fill="#e53e30" />
    <path d="M12 12L22.400 6A12 12 0 0 1 12 24z" fill="#fbc11b" />
    <path d="M12 12L12 24A12 12 0 0 1 1.600 6z" fill="#2fa24c" />
    <path d="M12 6.500h10.600a12 12 0 0 1-10.600 17.500l4.800-9.300z" fill="#fbc11b" />
    <circle cx="12" cy="12" r="5.500" fill="#fff" />
    <circle cx="12" cy="12" r="4.400" fill="#3f83ee" />
  </svg>
);

const ThunderbirdIcon = () => (
  <svg viewBox="0 0 24 24" className="size-[23px]">
    <path d="M3 9C4 3 9 .5 14 .8c6 .7 10 5.700 9.500 11.500C23 19 18 23.500 12 23.300 6 23 1.500 19.500.5 13z" fill="#1d5fb8" />
    <path d="M5 6C10 0 18 1 21 7c-4-3-8-2-11-1z" fill="#4ba1ea" />
    <path d="M18 7c4 4 3 11-3 15 7-1 9-8 7-13z" fill="#123b80" />
    <path d="M2 10l12-3 3 3-1 8-6 2-7-4z" fill="#f3f4f6" />
    <path d="M3 11l6 4 7-5" fill="none" stroke="#b9c0cb" />
    <path d="M0 13c2 0 3 1 4 3l3 4c-4 0-6-3-7-7z" fill="#2f7fd3" />
  </svg>
);

const FolderIcon = () => (
  <svg viewBox="0 0 24 24" className="size-[23px]">
    <path d="M2 3.500h8l2 2.500h11V20H2z" fill="#e2a72b" />
    <path d="M2 8h21v12H2z" fill="#fbd66b" />
    <path d="M5.500 21V14.500q0-1.500 1.500-1.500h11q1.500 0 1.500 1.500V21H16v-3.500H9V21z" fill="#3b93d9" />
  </svg>
);

const StoreIcon = () => (
  <svg viewBox="0 0 24 24" className="size-6">
    <path d="M7 7V1.500h10V7" fill="none" stroke="#e6e6e6" strokeWidth="1.500" />
    <path d="M1 6.500h22V23.500H1z" fill="#f2f2f2" />
    <path d="M7.500 11h4v4h-4z" fill="#f04e23" />
    <path d="M12.300 11h4v4h-4z" fill="#7fba00" />
    <path d="M7.500 15.800h4v4h-4z" fill="#00a4ef" />
    <path d="M12.300 15.800h4v4h-4z" fill="#ffb900" />
  </svg>
);

const TaskViewIcon = () => (
  <svg viewBox="0 0 16 16" className="-ml-1 size-4" fill="none" stroke="#c3c9cc" strokeWidth="1.200">
    <path d="M.8 1v1.500h9.500V1M.8 5h9.500v6H.8zM.8 15v-1.500h9.500V15M14.500 1v3M14.500 8v7" />
    <circle cx="14.500" cy="6" r=".8" fill="#fff" />
  </svg>
);

const apps: { name: string; icon: React.ReactNode }[] = [
  { name: "Cortana", icon: <span className="size-[15px] rounded-full border-[2px] border-white" /> },
  { name: "Task View", icon: <TaskViewIcon /> },
  { name: "Firefox", icon: <FirefoxIcon /> },
  { name: "Edge", icon: <EdgeIcon /> },
  { name: "Moon", icon: <MoonIcon /> },
  { name: "Chrome", icon: <ChromeIcon /> },
  { name: "Thunderbird", icon: <ThunderbirdIcon /> },
  { name: "File Explorer", icon: <FolderIcon /> },
  { name: "Microsoft Store", icon: <StoreIcon /> },
];

function Taskbar() {
  return (
    <footer className="flex h-[38px] shrink-0 items-stretch border-t border-[#6f7a80] bg-[#203039] text-white">
      <button type="button" aria-label="Start" className="grid w-[45px] shrink-0 place-items-center">
        <svg viewBox="0 0 16 16" className="size-4" fill="#fff">
          <path d="M0 2.300l7-1v6.400H0zM7.600 1.200L16 0v7.700H7.600zM0 8.300h7v6.400l-7-1zM7.600 8.300H16V16l-8.400-1.200z" />
        </svg>
      </button>
      <label className="flex w-[321px] shrink items-center gap-[9px] border border-[#c4c4c4] bg-[#f1f1f1] pl-[10px] text-[#333]">
        <Search className="size-[18px] -scale-x-100" strokeWidth={1.6} />
        <input type="text" aria-label="Search" placeholder="Type here to search" className="min-w-0 flex-1 bg-transparent text-[13px] outline-none placeholder:text-[#444]" />
      </label>
      <div className="flex">
        {apps.map((a) => (
          <button
            key={a.name}
            type="button"
            aria-label={a.name}
            className={
              a.name === "Firefox"
                ? "grid w-[47px] place-items-center border-b-2 border-[#f5cf9b] bg-[#4d585f] pt-px"
                : "grid w-[47px] place-items-center"
            }
          >
            {a.icon}
          </button>
        ))}
      </div>
      <div className="ml-auto flex items-center">
        <button type="button" className="flex items-center gap-[9px] text-[12px] text-[#eceff0]">
          <svg viewBox="0 0 20 20" className="size-5">
            <circle cx="9" cy="8" r="7.500" fill="#fbb32c" />
            <circle cx="10" cy="6.500" r="5" fill="#ffcf57" />
            <path d="M5 19q-4-1-4-4.500T5 10q2-3 5.500-2.500T15 11q4 0 4.500 4T16 19z" fill="#cfe6fa" />
            <path d="M2 16q4 2 8-1t9-1" fill="none" stroke="#a9d1f4" strokeWidth="1.500" />
          </svg>
          79°F
        </button>
        <div className="ml-[14px] flex items-center gap-[7px]">
          <button type="button" aria-label="Show hidden icons"><ChevronUp className="size-[16px]" strokeWidth={1.8} /></button>
          <svg viewBox="0 0 14 14" className="size-[14px]">
            <path d="M1 .5h8l1 13H1z" fill="#d7dadd" stroke="#fff" strokeWidth=".8" />
            <path d="M3 2l1 4v6M6 2l.5 4" stroke="#46525a" strokeWidth="1.300" fill="none" />
            <circle cx="10" cy="9.500" r="3.900" fill="#fff" />
            <path d="M8.700 7l4 2.500-4 2.500z" fill="#1fb52c" />
          </svg>
          <svg viewBox="0 0 16 14" className="h-[14px] w-4">
            <path d="M4 11.500a3.500 3.500 0 0 1-.5-6.500A4.500 4.500 0 0 1 12 5.500a3 3 0 0 1 .5 6z" fill="#f1f1f1" />
            <path d="M1 9l6-2.500 7 4.500-1 1H3z" fill="#c9cccf" />
          </svg>
          <svg viewBox="0 0 16 14" className="h-[14px] w-4" fill="none" stroke="#fff">
            <path d="M5 4.500h9.500v7H4V8" />
            <path d="M6.500 6h6.500v4H6z" fill="#e6e8e9" />
            <path d="M1 1.500v2.500q0 2 1.500 2T4.500 4V1.500M.5 4h4.500M2.700 6v3" />
          </svg>
          <svg viewBox="0 0 14 14" className="size-[14px]" fill="none" stroke="#e9ebec">
            <path d="M.8 5h2L6.500 2v10L2.800 9h-2zM9 5l4 4M13 5L9 9" />
          </svg>
          <svg viewBox="0 0 16 14" className="h-[14px] w-4" fill="none" stroke="#e9ebec">
            <path d="M5.500 2.500h10v7h-10V6M7.500 12.500h5M10 9.500v3M.8 1h4v4h-4zM2.800 5v4.500h1.500" />
          </svg>
        </div>
        <button type="button" className="ml-[6px] w-[60px] text-center text-[11px] leading-[18px] whitespace-nowrap text-[#f0f2f3]">
          <span className="block">1:32 PM</span>
          <span className="block">6/28/2021</span>
        </button>
        <button type="button" aria-label="1 notification" className="relative mr-[19px] ml-[14px]">
          <svg viewBox="0 0 16 16" className="size-4"><path d="M0 0h16v11.500H7.500L4 15v-3.500H0z" fill="#fff" /><path d="M3 3.500h10M3 5.800h10M3 8.100h6" stroke="#2a3942" /></svg>
          <span className="absolute top-[6px] left-2 grid size-[15px] place-items-center rounded-full border border-[#8b9398] bg-[#26323a] text-[10px] leading-none font-semibold">1</span>
        </button>
        <span className="mr-1 h-full w-px bg-[#6f7a80]" />
      </div>
    </footer>
  );
}

export default function App() {
  return (
    <div className="flex h-screen flex-col overflow-hidden bg-[#f0f0f0] font-['Open_Sans',sans-serif] text-[#15141a]">
      <header className="shrink-0">
        <MenuBar />
        <div className="flex h-10 items-center gap-0.5 pb-0.5 pl-px">
          <Tab title="No start dead battery" icon={<BlueSpanner />} />
          <Tab title="Volvo S40/V40 (2003) Wiring Di" icon={<VLogo />} active />
          <button type="button" aria-label="New tab" className="ml-3"><Plus className="size-4" strokeWidth={1.6} /></button>
        </div>
        <NavBar />
        <BookmarksBar />
        <PdfToolbar />
      </header>
      <Viewer />
      <Taskbar />
    </div>
  );
}
